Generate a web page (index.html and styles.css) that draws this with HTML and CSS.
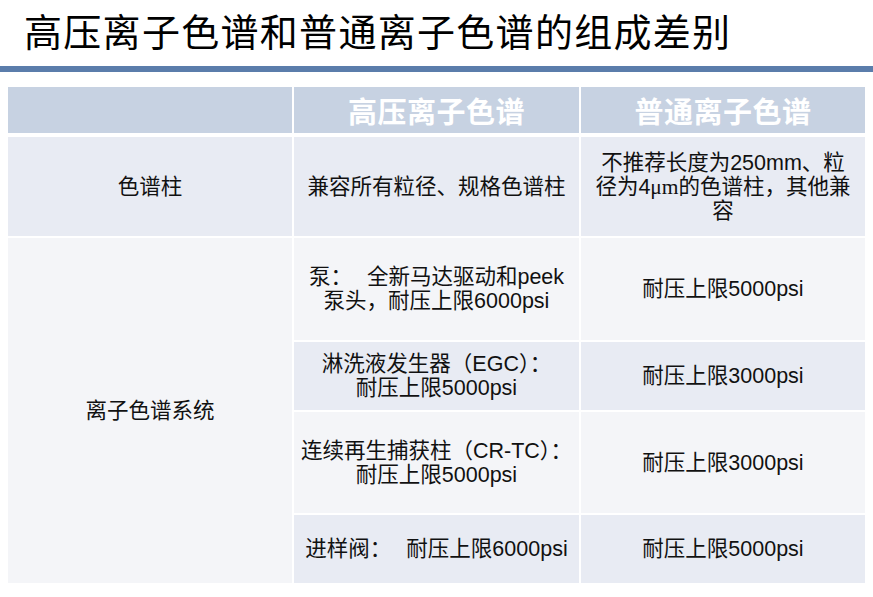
FILE: index.html
```html
<!DOCTYPE html>
<html lang="zh-CN">
<head>
<meta charset="utf-8">
<title>高压离子色谱和普通离子色谱的组成差别</title>
<link rel="stylesheet" href="styles.css">
</head>
<body>
<header class="title">高压离子色谱和普通离子色谱的组成差别</header>
<div class="rule"></div>
<div class="table">
  <div class="cell head"></div>
  <div class="cell head"><p class="txt">高压离子色谱</p></div>
  <div class="cell head"><p class="txt">普通离子色谱</p></div>

  <div class="cell dark"><p class="txt">色谱柱</p></div>
  <div class="cell dark"><p class="txt">兼容所有粒径、规格色谱柱</p></div>
  <div class="cell dark"><p class="txt">不推荐长度为250mm、粒<br>径为4<span class="serif">μm</span>的色谱柱，其他兼<br>容</p></div>

  <div class="cell light system"><p class="txt">离子色谱系统</p></div>
  <div class="cell light"><p class="txt">泵：<span class="gap"></span>全新马达驱动和peek<br>泵头，耐压上限6000psi</p></div>
  <div class="cell light"><p class="txt">耐压上限5000psi</p></div>

  <div class="cell dark"><p class="txt">淋洗液发生器（EGC）：<br>耐压上限5000psi</p></div>
  <div class="cell dark"><p class="txt">耐压上限3000psi</p></div>

  <div class="cell light"><p class="txt">连续再生捕获柱（CR-TC）：<br>耐压上限5000psi</p></div>
  <div class="cell light"><p class="txt">耐压上限3000psi</p></div>

  <div class="cell dark"><p class="txt">进样阀：<span class="gap"></span>耐压上限6000psi</p></div>
  <div class="cell dark"><p class="txt">耐压上限5000psi</p></div>
</div>
</body>
</html>
```
FILE: styles.css
```css
html, body {
  margin: 0;
  padding: 0;
  background: #ffffff;
}

body {
  width: 873px;
  height: 597px;
  overflow: hidden;
  font-family: "Liberation Sans", "Noto Sans CJK SC", sans-serif;
  color: #111111;
}

.title {
  height: 55px;
  padding: 11px 0 0 24px;
  font-family: "Noto Sans CJK SC", sans-serif;
  font-size: 38px;
  line-height: 38px;
  letter-spacing: 1.3px;
  color: #000000;
  white-space: nowrap;
}

.rule {
  height: 6px;
  background: #5b7dab;
}

.table {
  margin: 15px 0 0 8px;
  width: 857px;
  display: grid;
  grid-template-columns: 284px 285px 284px;
  grid-template-rows: 48px 99px 102px 68px 101px 68px;
  gap: 2px;
}

.cell {
  display: flex;
  align-items: center;
  justify-content: center;
  font-size: 21.5px;
  line-height: 24px;
}

.txt {
  margin: 0;
  text-align: center;
  white-space: nowrap;
}

.head {
  margin-bottom: 2px;
  background: #c7d2e2;
  color: #ffffff;
  font-family: "Noto Sans CJK SC", sans-serif;
  font-size: 29px;
  font-weight: 700;
  letter-spacing: 0.5px;
}

.dark {
  background: #e8ebf3;
}

.light {
  background: #f4f5f8;
}

.system {
  grid-row: 3 / span 4;
  grid-column: 1;
}

.serif {
  font-family: "Liberation Serif", serif;
}

.gap {
  display: inline-block;
  width: 15px;
}
```
